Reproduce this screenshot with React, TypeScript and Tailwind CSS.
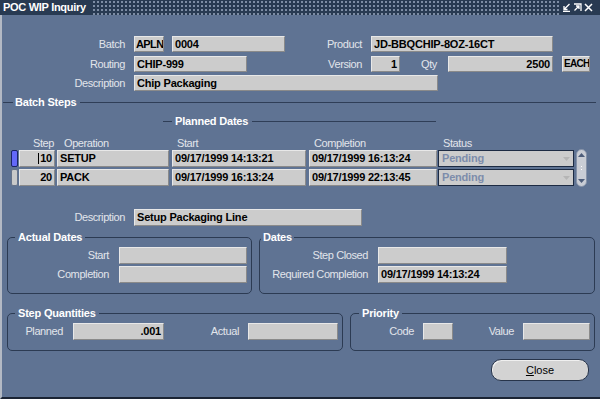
import React from "react";

const LABEL = "text-[11px] leading-none tracking-[-0.4px] text-[#e2e5eb] whitespace-nowrap";

function Label({ className = "", children }: { className?: string; children?: React.ReactNode }) {
  return <div className={`${LABEL} ${className}`}>{children}</div>;
}

function Field({
  className = "",
  right = false,
  children,
}: {
  className?: string;
  right?: boolean;
  children?: React.ReactNode;
}) {
  return (
    <div
      className={`flex shrink-0 items-center overflow-hidden whitespace-nowrap border border-t-[#e8e8e8] border-l-[#e8e8e8] border-r-[#8a8a8a] border-b-[#8a8a8a] bg-[#cccccc] text-[11px] font-bold leading-none tracking-[-0.2px] text-black ${
        right ? "justify-end pr-[2px]" : "pl-[2px]"
      } ${className}`}
    >
      {children}
    </div>
  );
}

function Frame({
  title,
  className = "",
  legendClass = "ml-[7px] px-[3px]",
  children,
}: {
  title: string;
  className?: string;
  legendClass?: string;
  children?: React.ReactNode;
}) {
  return (
    <fieldset className={`min-w-0 shrink-0 rounded-[5px] border border-[#2c3b53] ${className}`}>
      <legend className={`text-[11px] font-bold leading-[12px] tracking-[-0.2px] text-white ${legendClass}`}>{title}</legend>
      {children}
    </fieldset>
  );
}

function Status() {
  return (
    <div className="flex h-[17px] w-[136px] items-center justify-between border border-[#1d2b43] bg-[#cccccc] pl-[3px] pr-[3px] text-[11px] font-bold leading-none tracking-[-0.2px] text-[#7d8cab]">
      <span>Pending</span>
      <svg width="7" height="4" viewBox="0 0 7 4">
        <path d="M0 0 L7 0 L3.5 4 Z" fill="#b5b5b5" />
      </svg>
    </div>
  );
}

function StepRow({ step, op, start, end, current }: { step: string; op: string; start: string; end: string; current?: boolean }) {
  return (
    <div className="flex h-[17px] items-stretch">
      <div
        className={`w-[7px] shrink-0 rounded-[2px] border ${
          current
            ? "border-[#1b2466] bg-[#1e22f2] bg-[radial-gradient(circle,#8a90ff_0.6px,transparent_0.9px)] bg-size-[2px_2px]"
            : "border-[#66738a] bg-[#c9c9c9]"
        }`}
      />
      <Field right className="ml-[1px] w-[36px]">
        {current && <span className="mr-[1px] h-[11px] w-px bg-black" />}
        {step}
      </Field>
      <Field className="ml-[2px] w-[112px]">{op}</Field>
      <Field className="ml-[3px] w-[134px]">{start}</Field>
      <Field className="ml-[3px] w-[128px]">{end}</Field>
      <div className="ml-[1px]">
        <Status />
      </div>
    </div>
  );
}

function TitleIcons() {
  return (
    <div className="flex h-full items-center gap-[2px] bg-[#283a52] pl-[3px] pr-[7px]">
      <svg width="9" height="9" viewBox="0 0 9 9" fill="none" stroke="white" strokeWidth="1.3">
        <path d="M7.5 1 L2 6.5 M2 3 L2 6.5 L5.5 6.5 M1 8.3 L8 8.3" />
      </svg>
      <svg width="9" height="9" viewBox="0 0 9 9" fill="none" stroke="white" strokeWidth="1.3">
        <path d="M1 1 L8 1 L8 8 M1.5 7.5 L6 3 M3 3 L6 3 L6 6" />
      </svg>
      <svg width="9" height="9" viewBox="0 0 9 9" fill="none" stroke="white" strokeWidth="1.5">
        <path d="M1 1 L8 8 M8 1 L1 8" />
      </svg>
    </div>
  );
}

export default function App() {
  return (
    <div className="flex h-[399px] w-[600px] flex-col overflow-hidden bg-[#5f7393] font-['Liberation_Sans',Arial,sans-serif]">
      {/* title bar */}
      <div className="flex h-[15px] shrink-0 items-center justify-between bg-[#283a52] bg-[radial-gradient(circle,#7f8fa6_0.7px,transparent_1px)] bg-size-[4px_4px]">
        <div className="flex h-full items-center bg-[#283a52] pl-[3px] pr-[6px] text-[11px] font-bold tracking-[-0.3px] text-white">
          POC WIP Inquiry
        </div>
        <TitleIcons />
      </div>

      <div className="flex flex-1 flex-col border-b-2 border-l-2 border-b-[#1b2434] border-l-[#b3b9c4]">
        {/* header fields */}
        <div className="mt-[21px] flex h-[16px] items-center">
          <Label className="w-[123px] text-right">Batch</Label>
          <Field className="ml-[9px] h-[16px] w-[30px] !pl-[1px] tracking-[-0.6px]">APLN</Field>
          <Field className="ml-[8px] h-[16px] w-[113px]">0004</Field>
          <Label className="w-[77px] text-right">Product</Label>
          <Field className="ml-[9px] h-[16px] w-[182px]">JD-BBQCHIP-8OZ-16CT</Field>
        </div>
        <div className="mt-[4px] flex h-[16px] items-center">
          <Label className="w-[123px] text-right">Routing</Label>
          <Field className="ml-[9px] h-[16px] w-[113px]">CHIP-999</Field>
          <Label className="w-[115px] text-right">Version</Label>
          <Field right className="ml-[9px] h-[16px] w-[29px]">1</Field>
          <Label className="ml-[21px] w-[27px]">Qty</Label>
          <Field right className="h-[16px] w-[105px]">2500</Field>
          <Field className="ml-[9px] h-[16px] w-[28px] !pl-[1px] !text-[10px] !tracking-[-0.7px]">EACH</Field>
        </div>
        <div className="mt-[3px] flex h-[16px] items-center">
          <Label className="w-[123px] text-right">Description</Label>
          <Field className="ml-[9px] h-[16px] w-[304px]">Chip Packaging</Field>
        </div>

        {/* Batch Steps */}
        <div className="mt-[5px] flex h-[12px] items-center pl-[1px] pr-[4px]">
          <div className="h-px w-[10px] bg-[#2f3e57]" />
          <span className="ml-[2px] text-[11px] font-bold leading-none tracking-[-0.2px] text-white">Batch Steps</span>
          <div className="ml-[4px] h-px flex-1 bg-[#2f3e57]" />
        </div>
        <div className="mt-[7px] flex h-[12px] items-center pl-[161px]">
          <div className="h-px w-[9px] bg-[#2f3e57]" />
          <span className="ml-[3px] text-[11px] font-bold leading-none tracking-[-0.2px] text-white">Planned Dates</span>
          <div className="ml-[4px] h-px w-[184px] bg-[#2f3e57]" />
        </div>

        <div className="mt-[10px] flex h-[12px] items-center pl-[9px]">
          <Label className="w-[45px] pr-[2px] text-right">Step</Label>
          <Label className="w-[117px] pl-[8px]">Operation</Label>
          <Label className="w-[137px] pl-[4px]">Start</Label>
          <Label className="w-[131px] pl-[4px]">Completion</Label>
          <Label className="pl-[2px]">Status</Label>
        </div>

        <div className="mt-[1px] flex items-start pl-[9px]">
          <div className="flex flex-col gap-[2px]">
            <StepRow current step="10" op="SETUP" start="09/17/1999 14:13:21" end="09/17/1999 16:13:24" />
            <StepRow step="20" op="PACK" start="09/17/1999 16:13:24" end="09/17/1999 22:13:45" />
          </div>
          <div className="-mt-[1px] ml-[2px] flex h-[38px] w-[11px] flex-col items-center justify-between rounded-full border border-[#8592a8] bg-[#c9cdd5] py-[3px]">
            <svg width="7" height="5" viewBox="0 0 7 5">
              <path d="M0 4 L7 4 L3.5 0 Z" fill="#4d5d7a" />
            </svg>
            <div className="flex flex-col items-center gap-[2px]">
              <div className="h-px w-px bg-white" />
              <div className="h-px w-px bg-white" />
            </div>
            <svg width="7" height="5" viewBox="0 0 7 5">
              <path d="M0 1 L7 1 L3.5 5 Z" fill="#4d5d7a" />
            </svg>
          </div>
        </div>

        <div className="mt-[22px] flex h-[17px] items-center">
          <Label className="w-[123px] text-right">Description</Label>
          <Field className="ml-[9px] h-[17px] w-[228px]">Setup Packaging Line</Field>
        </div>

        {/* dates frames */}
        <div className="mt-[5px] flex pl-[5px]">
          <Frame title="Actual Dates" className="h-[63px] w-[245px]">
            <div className="mt-[4px] flex h-[17px] items-center">
              <Label className="w-[101px] text-right">Start</Label>
              <Field className="ml-[10px] h-[17px] w-[128px]" />
            </div>
            <div className="mt-[2px] flex h-[17px] items-center">
              <Label className="w-[101px] text-right">Completion</Label>
              <Field className="ml-[10px] h-[17px] w-[128px]" />
            </div>
          </Frame>
          <Frame title="Dates" legendClass="ml-[1px] px-[2px]" className="ml-[7px] h-[63px] w-[336px]">
            <div className="mt-[4px] flex h-[17px] items-center">
              <Label className="w-[108px] text-right">Step Closed</Label>
              <Field className="ml-[10px] h-[17px] w-[129px]" />
            </div>
            <div className="mt-[2px] flex h-[17px] items-center">
              <Label className="w-[108px] text-right">Required Completion</Label>
              <Field className="ml-[10px] h-[17px] w-[129px]">09/17/1999 14:13:24</Field>
            </div>
          </Frame>
        </div>

        {/* quantities + priority */}
        <div className="mt-[13px] flex pl-[5px]">
          <Frame title="Step Quantities" className="h-[44px] w-[336px]">
            <div className="mt-[4px] flex h-[17px] items-center">
              <Label className="w-[55px] text-right">Planned</Label>
              <Field right className="ml-[10px] h-[17px] w-[91px]">.001</Field>
              <Label className="w-[75px] text-right">Actual</Label>
              <Field className="ml-[9px] h-[17px] w-[90px]" />
            </div>
          </Frame>
          <Frame title="Priority" legendClass="ml-[8px] px-[3px]" className="ml-[7px] h-[44px] w-[245px]">
            <div className="mt-[4px] flex h-[17px] items-center">
              <Label className="w-[63px] text-right">Code</Label>
              <Field className="ml-[9px] h-[17px] w-[30px]" />
              <Label className="w-[61px] text-right">Value</Label>
              <Field className="ml-[9px] h-[17px] w-[67px]" />
            </div>
          </Frame>
        </div>

        <div className="mt-[8px] flex justify-end pr-[11px]">
          <button className="flex h-[22px] w-[98px] items-center justify-center rounded-[10px] border border-[#27344a] bg-[#d3d3d3] text-[11px] leading-none text-black shadow-[inset_1px_1px_0_#efefef]">
            <span className="underline">C</span>lose
          </button>
        </div>
      </div>
    </div>
  );
}
